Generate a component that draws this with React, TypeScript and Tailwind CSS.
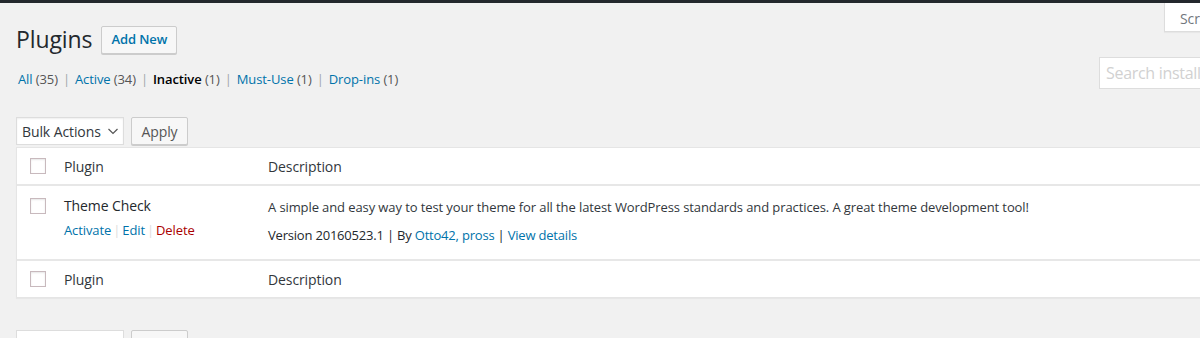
import React from "react";

const font = { fontFamily: '"Open Sans", "Noto Sans", sans-serif' };

function Checkbox() {
  return <span className="block w-4 h-4 bg-white border border-[#c8b9bd] shadow-[inset_0_1px_2px_rgba(0,0,0,0.1)]" />;
}

function Sep() {
  return <span className="text-[#a0a5aa] mx-[5px]">|</span>;
}

export default function App() {
  return (
    <div className="w-[1200px] h-[338px] overflow-hidden bg-[#f1f1f1] text-[13px] text-[#444] tracking-[-0.1px]" style={font}>
      <div className="h-[3px] bg-[#23282d]" />
      <div className="relative">
        <div className="absolute right-[-10px] top-0 w-[46px] h-[29px] bg-white border border-t-0 border-[#ddd] shadow-[0_1px_1px_rgba(0,0,0,0.04)] pl-[15px] pt-[5px] text-[#72777c] text-[14px]">
          Scr
        </div>
        <div className="absolute right-[-10px] top-[54px] w-[111px] h-[32px] bg-white border border-[#ddd] pl-[6px] flex items-center text-[16px] text-[#d1d1d1] tracking-[-0.3px]">
          <span className="whitespace-nowrap">Search installed</span>
        </div>
      </div>
      <div className="pl-4 pt-[22px] flex items-center gap-[9px]">
        <h1 className="text-[23px] leading-[29px] text-[#23282d] font-normal">Plugins</h1>
        <span className="h-[28px] px-[9px] flex items-center border border-[#ccc] bg-[#f7f7f7] rounded-[2px] text-[#0073aa] font-semibold text-[13px] shadow-[0_1px_0_#ccc]">
          Add New
        </span>
      </div>
      <div className="pl-[18px] mt-[16px] h-[20px] flex items-center text-[13px]">
        <span className="text-[#0073aa]">All</span>&nbsp;<span className="text-[#555]">(35)</span>
        <Sep />
        <span className="text-[#0073aa]">Active</span>&nbsp;<span className="text-[#555]">(34)</span>
        <Sep />
        <span className="text-black font-semibold">Inactive</span>&nbsp;<span className="text-[#555]">(1)</span>
        <Sep />
        <span className="text-[#0073aa]">Must-Use</span>&nbsp;<span className="text-[#555]">(1)</span>
        <Sep />
        <span className="text-[#0073aa]">Drop-ins</span>&nbsp;<span className="text-[#555]">(1)</span>
      </div>
      <div className="pl-4 mt-[27px] flex gap-[7px]">
        <div className="w-[108px] h-[28px] bg-white border border-[#ddd] flex items-center pl-[5px] gap-[6px] text-[14px] text-[#32373c] shadow-[inset_0_1px_2px_rgba(0,0,0,0.07)]">
          <span>Bulk Actions</span>
          <svg width="12" height="12" viewBox="0 0 12 12" fill="none" stroke="#555" strokeWidth="1.2">
            <path d="M1.5 4 L6 8.5 L10.5 4" />
          </svg>
        </div>
        <div className="w-[57px] h-[28px] bg-[#f7f7f7] border border-[#ccc] rounded-[2px] flex items-center justify-center text-[14px] text-[#555] shadow-[0_1px_0_#ccc]">
          Apply
        </div>
      </div>
      <div className="ml-4 mt-[2px] w-[1200px] bg-white border border-[#e5e5e5] shadow-[0_1px_1px_rgba(0,0,0,0.04)]">
        <div className="h-[38px] flex items-center border-b-2 border-[#e7e7e7] text-[14px] text-[#32373c]">
          <div className="w-[47px] pl-[13px]"><Checkbox /></div>
          <div className="w-[204px]">Plugin</div>
          <div>Description</div>
        </div>
        <div className="h-[75px] flex border-b-2 border-[#e7e7e7]">
          <div className="w-[47px] pl-[13px] pt-[12px]"><Checkbox /></div>
          <div className="w-[204px] pt-[10px]">
            <div className="text-[14px] text-[#23282d] leading-[20px]">Theme Check</div>
            <div className="mt-[5px] text-[13px] leading-[18px]">
              <span className="text-[#0073aa]">Activate</span>
              <span className="text-[#ddd] mx-[2px]">|</span>
              <span className="text-[#0073aa]">Edit</span>
              <span className="text-[#ddd] mx-[2px]">|</span>
              <span className="text-[#a00]">Delete</span>
            </div>
          </div>
          <div className="pt-[12px] text-[13px] text-[#32373c]">
            <div className="leading-[18px] whitespace-nowrap">A simple and easy way to test your theme for all the latest WordPress standards and practices. A great theme development tool!</div>
            <div className="mt-[10px] leading-[18px] whitespace-nowrap text-[#23282d] tracking-[-0.2px]">
              Version 20160523.1 | By <span className="text-[#0073aa]">Otto42, pross</span> | <span className="text-[#0073aa]">View details</span>
            </div>
          </div>
        </div>
        <div className="h-[36px] flex items-center text-[14px] text-[#32373c]">
          <div className="w-[47px] pl-[13px]"><Checkbox /></div>
          <div className="w-[204px]">Plugin</div>
          <div>Description</div>
        </div>
      </div>
      <div className="pl-4 mt-[32px] flex gap-[7px]">
        <div className="w-[108px] h-[28px] bg-white border border-[#ddd]" />
        <div className="w-[57px] h-[28px] bg-[#f7f7f7] border border-[#ccc] rounded-[2px]" />
      </div>
    </div>
  );
}
